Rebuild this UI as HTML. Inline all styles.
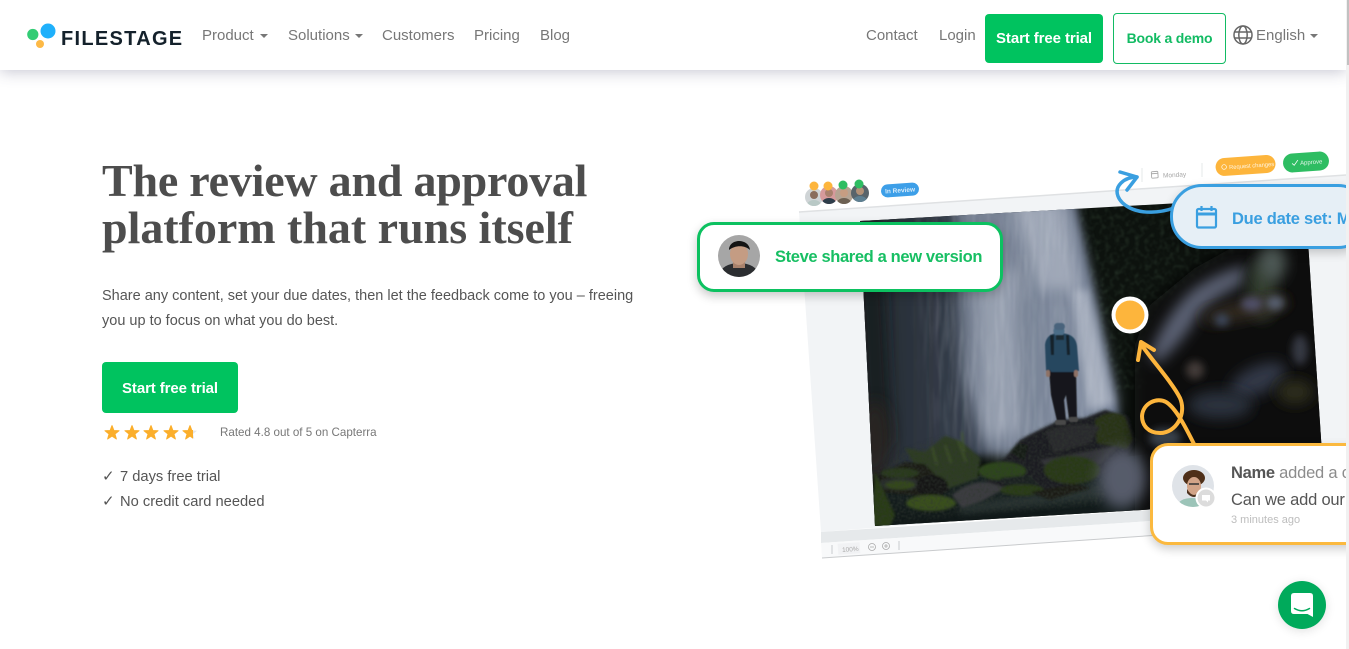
<!DOCTYPE html>
<html lang="en"><head><meta charset="utf-8"><title>Filestage</title>
<style>
html,body{margin:0;padding:0;background:#fff}
body{width:1349px;height:649px;overflow:hidden;position:relative;font-family:"Liberation Sans",sans-serif;color:#555}
.t{position:absolute;white-space:nowrap}
#nav{position:absolute;left:0;top:0;width:1346px;height:70px;background:#fff;box-shadow:0 2px 14px rgba(70,70,110,.3);z-index:5}
#nav .l{position:absolute;top:27px;font-size:15px;line-height:18px;color:#777;white-space:nowrap}
.car{display:inline-block;width:0;height:0;border:4px solid transparent;border-top-color:#777;border-bottom:0;margin-left:5px;vertical-align:2px}
.btn{position:absolute;box-sizing:border-box;text-align:center;font-weight:bold;font-size:14px;letter-spacing:-.2px;border-radius:4px}
.note{position:absolute;box-sizing:border-box;background:#fff;z-index:3}
#bar{position:absolute;left:1346px;top:0;width:3px;height:649px;background:#f1f1f1;z-index:6}
#bar i{position:absolute;left:1px;top:0;width:2px;height:65px;background:#c1c1c1}
</style></head><body>

<svg width="1349" height="649" viewBox="0 0 1349 649" style="position:absolute;left:0;top:0">
<defs>
<filter id="b1" x="-10%" y="-10%" width="120%" height="120%"><feGaussianBlur stdDeviation="1.300"/></filter>
<filter id="b05" x="-10%" y="-10%" width="120%" height="120%"><feGaussianBlur stdDeviation=".6"/></filter>
<filter id="b4" x="-40%" y="-40%" width="180%" height="180%"><feGaussianBlur stdDeviation="4"/></filter>
<filter id="b7" x="-40%" y="-40%" width="180%" height="180%"><feGaussianBlur stdDeviation="7"/></filter>
<filter id="b12" x="-40%" y="-40%" width="180%" height="180%"><feGaussianBlur stdDeviation="12"/></filter>
<filter id="st" x="-5%" y="-5%" width="110%" height="110%"><feTurbulence type="fractalNoise" baseFrequency=".22 .02" numOctaves="3" seed="4" result="n0"/><feColorMatrix in="n0" values="0 0 0 0 .86  0 0 0 0 .89  0 0 0 0 .94  1.6 0 0 0 -.62" result="n1"/><feGaussianBlur in="n1" stdDeviation=".7" result="n2"/><feGaussianBlur in="SourceAlpha" stdDeviation="10" result="a"/><feComposite in="n2" in2="a" operator="in"/></filter>
<filter id="gr" x="0" y="0" width="100%" height="100%"><feTurbulence type="fractalNoise" baseFrequency=".2" numOctaves="2" seed="9"/><feColorMatrix values="0 0 0 0 .09  0 0 0 0 .17  0 0 0 0 .1  2 0 0 0 -.9"/><feGaussianBlur stdDeviation=".8"/></filter>
<filter id="sp" x="-5%" y="-5%" width="110%" height="110%"><feTurbulence type="fractalNoise" baseFrequency=".45" numOctaves="2" seed="3" result="n0"/><feColorMatrix in="n0" values="0 0 0 0 .03  0 0 0 0 .04  0 0 0 0 .03  3 0 0 0 -1.3" result="n1"/><feGaussianBlur in="n1" stdDeviation=".5" result="n2"/><feGaussianBlur in="SourceAlpha" stdDeviation="2" result="a"/><feComposite in="n2" in2="a" operator="in"/></filter>
<linearGradient id="sl" x1="0" x2="1" y1="0" y2="0"><stop offset="0" stop-color="#20252b"/><stop offset=".45" stop-color="#38414f"/><stop offset="1" stop-color="#626f86"/></linearGradient>
<linearGradient id="wat" x1="0" x2="0" y1="0" y2="1"><stop offset="0" stop-color="#1e2a2b"/><stop offset="1" stop-color="#0f1616"/></linearGradient>
<clipPath id="ph"><polygon points="860,221 1305,196 1325,499 875,526"/></clipPath>
<clipPath id="a1"><circle cx="814" cy="197" r="9"/></clipPath>
<clipPath id="a2"><circle cx="829" cy="195" r="9"/></clipPath>
<clipPath id="a3"><circle cx="844" cy="195" r="9"/></clipPath>
<clipPath id="a4"><circle cx="860" cy="193" r="9"/></clipPath>
<clipPath id="st1"><circle cx="739" cy="256" r="21"/></clipPath>
<clipPath id="nm"><circle cx="1193" cy="486" r="21"/></clipPath>
</defs>

<!-- document frame -->
<polygon points="799,212 1346,175 1346,490 821,532" fill="#f2f4f6"/>
<path d="M799 212L1346 175" stroke="#dfe1e3" stroke-width="1.500" fill="none"/>
<polygon points="821,532 1346,497 1346,508 821,543" fill="#e6e9eb"/>
<polygon points="821,543 1346,508 1346,523 822,558" fill="#f8f9fa"/>
<path d="M822 558L1160 535" stroke="#c9cbcd" stroke-width="1" fill="none"/>
<!-- bottom toolbar -->
<path d="M832 545v9M899 541v9" stroke="#c9cbcd" stroke-width="1" fill="none"/>
<rect x="838" y="543" width="22" height="11" fill="#f1f2f4" transform="rotate(-4 849 549)"/>
<text x="842" y="551.500" font-family="Liberation Sans" font-size="6.500" fill="#aaa" transform="rotate(-4 849 549)">100%</text>
<g fill="none" stroke="#aaa" stroke-width=".8"><circle cx="872" cy="547" r="3.500"/><path d="M870 547h4"/><circle cx="886" cy="546" r="3.500"/><path d="M884 546h4M886 544v4"/></g>

<!-- photo -->
<g clip-path="url(#ph)">
<rect x="850" y="190" width="490" height="345" fill="#0d120e"/>
<rect x="1080" y="190" width="240" height="200" filter="url(#gr)" opacity=".3"/>
<polygon points="850,190 1072,190 1122,430 850,480" fill="url(#sl)" filter="url(#b4)"/>
<path d="M955 200L1072 200L1092 290L1118 405L1030 470L985 450L962 380Z" fill="#8e99ac" filter="url(#b7)" opacity=".72"/>
<path d="M975 270L1015 270L1020 430L985 440Z" fill="#bcc3d0" filter="url(#b7)" opacity=".45"/>
<path d="M1072 290L1088 290L1113 405L1088 410Z" fill="#c6ccd8" filter="url(#b4)" opacity=".55"/>
<path d="M1010 200L1062 200L1080 290L1040 290Z" fill="#c2c8d4" filter="url(#b7)" opacity=".5"/>
<polygon points="915,205 1070,205 1115,410 1000,460 935,430" filter="url(#st)" opacity=".2"/>
<path d="M855 215L880 215L892 440L868 470Z" fill="#171b1f" filter="url(#b7)" opacity=".8"/>
<ellipse cx="875" cy="440" rx="16" ry="40" fill="#2e2623" filter="url(#b7)" opacity=".7"/>
<!-- water -->
<polygon points="870,490 1180,450 1180,530 870,530" fill="url(#wat)"/>
<path d="M960 505L1100 485L1100 498L960 514Z" fill="#3c4a4a" filter="url(#b4)" opacity=".55"/>
<!-- bushes -->
<g filter="url(#b1)">
<path d="M905 448L925 452L945 436L962 442L980 458L978 478L950 488L925 482Z" fill="#2e3e22"/>
<path d="M962 432l2 20M958 440l8 22M945 445l6 18M932 447l5 18" stroke="#44582f" stroke-width="2" fill="none" opacity=".8"/>
<path d="M880 476L905 462L925 464L950 490L930 497L880 492Z" fill="#1b1d19"/>
<ellipse cx="900" cy="473" rx="19" ry="5" fill="#2b3a1e"/>
<ellipse cx="900" cy="484" rx="22" ry="6" fill="#2c2f2e"/>
<ellipse cx="900" cy="485" rx="15" ry="4.500" fill="#36491e"/>
<ellipse cx="932" cy="486" rx="16" ry="11" fill="#151512"/>
<ellipse cx="931" cy="503" rx="25" ry="8" fill="#3a511f"/>
<path d="M875 472L895 515L890 526L872 526Z" fill="#2c3e19"/>
</g>
<!-- rocks -->
<g filter="url(#b1)">
<path d="M985 474L1005 458L1020 440L1035 432L1060 420L1085 418L1105 410L1128 416L1135 440L1120 470L1050 492L990 492Z" fill="#1d1f20"/>
<path d="M1010 452q8-12 18-6l-4 14z" fill="#161a13"/>
<path d="M1095 420q15-12 30-3l8 22-6 10-30-6z" fill="#2b3518"/>
<path d="M1045 432q30-12 55-5l-10 16-36 10z" fill="#2a2b2e"/>
<path d="M1040 460L1118 446L1100 464L1050 472Z" fill="#35363a"/>
<ellipse cx="1002" cy="471" rx="24" ry="9" fill="#2e461b"/>
<ellipse cx="1072" cy="470" rx="28" ry="14" fill="#2c3b18"/>
<path d="M952 495q20-16 38-12l16 5-24 13-20 7z" fill="#3e3e43"/>
<path d="M1000 478l30-3 12 12-30 8z" fill="#1f2021"/>
<ellipse cx="1022" cy="490" rx="22" ry="5.500" fill="#2c3d17"/>
<path d="M1030 492l45-8 15 4-40 12z" fill="#1a1c15"/>
</g>
<!-- rock & foliage texture, limited to the rock silhouette -->
<path d="M985 474L1005 458L1020 440L1035 432L1060 420L1085 418L1105 410L1128 416L1135 440L1120 470L1100 505L960 515L875 525L875 475L905 450L945 436L980 458Z" filter="url(#sp)" opacity=".7"/>
<!-- person -->
<g filter="url(#b05)">
<path d="M1049 370L1076 370L1077 418L1069 419L1066 395L1064 400L1066 421L1057 421L1051 395Z" fill="#14171a"/>
<path d="M1045 345C1046 336 1052 333 1059 333C1068 333 1076 336 1077 346L1079 371L1075 371L1074 372L1051 372L1050 370L1046 371Z" fill="#28465f"/>
<path d="M1050 335l1 20 3 0 0-20zM1066 335l1 20 3 0-1-20z" fill="#16222b"/>
<circle cx="1059" cy="331" r="5.500" fill="#4c6d87"/>
<rect x="1054" y="323" width="11" height="7" rx="3.500" fill="#48637c"/>
<path d="M1056 335h8v5h-8z" fill="#1b2a33"/>
<rect x="1046" y="370" width="4" height="7" rx="2" fill="#8e7266"/>
<rect x="1074" y="370" width="4" height="7" rx="2" fill="#8e7266"/>
<rect x="1055" y="420" width="11" height="5" rx="2" fill="#4a4a48"/>
<rect x="1069" y="417" width="9" height="5" rx="2" fill="#4a4a48"/>
</g>
<!-- blurred foreground right -->
<path d="M1135 345L1150 305L1195 268L1255 235L1295 195L1340 190L1340 520L1135 520Z" fill="#0c0d0e" filter="url(#b7)"/>
<path d="M1150 355C1163 322 1180 300 1195 288C1215 275 1232 268 1248 266L1242 284C1222 295 1202 305 1192 325C1178 345 1168 355 1156 364Z" fill="#5c6274" filter="url(#b7)"/>
<ellipse cx="1262" cy="290" rx="14" ry="30" fill="#333c2e" filter="url(#b7)"/>
<ellipse cx="1272" cy="262" rx="14" ry="20" fill="#4d5955" filter="url(#b7)"/>
<ellipse cx="1245" cy="310" rx="45" ry="10" fill="#312b20" filter="url(#b7)" transform="rotate(-12 1245 310)"/>
<ellipse cx="1252" cy="304" rx="11" ry="7" fill="#4f4f68" filter="url(#b4)"/>
<ellipse cx="1275" cy="303" rx="9" ry="7" fill="#565e70" filter="url(#b4)"/>
<ellipse cx="1222" cy="320" rx="7" ry="6" fill="#3c485e" filter="url(#b4)"/>
<ellipse cx="1195" cy="370" rx="9" ry="9" fill="#423b37" filter="url(#b4)"/>
<ellipse cx="1258" cy="380" rx="30" ry="14" fill="#333846" filter="url(#b7)" transform="rotate(-25 1258 380)"/>
<ellipse cx="1300" cy="350" rx="8" ry="15" fill="#343743" filter="url(#b4)"/>
<ellipse cx="1295" cy="392" rx="18" ry="12" fill="#2f2f1b" filter="url(#b7)"/>
<ellipse cx="1220" cy="405" rx="32" ry="14" fill="#2a303c" filter="url(#b7)"/>
<ellipse cx="1122" cy="478" rx="24" ry="30" fill="#565b6a" filter="url(#b7)"/>
<ellipse cx="1165" cy="438" rx="16" ry="10" fill="#393f4a" filter="url(#b4)"/>
</g>

<!-- header toolbar of the doc -->
<g clip-path="url(#a1)"><rect x="804" y="187" width="20" height="20" fill="#cfd4d6"/><circle cx="814" cy="195" r="4" fill="#8a6d5c"/><ellipse cx="814" cy="205" rx="7" ry="5" fill="#b9c9c6"/></g>
<g clip-path="url(#a2)"><rect x="819" y="185" width="20" height="20" fill="#d59a9c"/><circle cx="829" cy="193" r="4" fill="#a9816e"/><ellipse cx="829" cy="203" rx="7" ry="5" fill="#2e3d4a"/></g>
<g clip-path="url(#a3)"><rect x="834" y="185" width="20" height="20" fill="#b5a493"/><circle cx="844" cy="193" r="4" fill="#c69d82"/><ellipse cx="844" cy="203" rx="7" ry="5" fill="#6d6153"/></g>
<g clip-path="url(#a4)"><rect x="850" y="183" width="20" height="20" fill="#59646b"/><circle cx="860" cy="191" r="4" fill="#b39177"/><ellipse cx="860" cy="201" rx="7" ry="5" fill="#5f8092"/></g>
<circle cx="814" cy="186" r="4.500" fill="#fdb53c"/><circle cx="828" cy="186" r="4.500" fill="#fdb53c"/><circle cx="843" cy="185" r="4.500" fill="#2ebd62"/><circle cx="859" cy="184" r="4.500" fill="#2ebd62"/>
<g transform="rotate(-4 900 190)"><rect x="881" y="183.500" width="38" height="13" rx="6.500" fill="#3d9fe8"/><text x="900" y="192.500" font-family="Liberation Sans" font-size="6.500" font-weight="bold" fill="#d8ecfb" text-anchor="middle">In Review</text></g>
<path d="M1142 168v14M1202 163v14" stroke="#e6e8ea" stroke-width="1" fill="none"/>
<g transform="rotate(-4 1155 175)"><rect x="1151.500" y="171.500" width="6.500" height="6.500" rx="1" fill="none" stroke="#aaa" stroke-width=".9"/><path d="M1151.500 173.500h6.500" stroke="#aaa" stroke-width=".9"/></g>
<text x="1163" y="177" font-family="Liberation Sans" font-size="6.500" fill="#a5a5a5" transform="rotate(-3 1175 175)">Monday</text>
<g transform="rotate(-4 1245 165)"><rect x="1215.500" y="156.500" width="60" height="18" rx="9" fill="#fdb53c"/><circle cx="1224" cy="165.500" r="2.300" fill="none" stroke="#fff" stroke-width=".7"/><text x="1229" y="168" font-family="Liberation Sans" font-size="5.800" fill="#fff5e0">Request changes</text></g>
<g transform="rotate(-4 1306 162)"><rect x="1283" y="152.500" width="46" height="19" rx="9.500" fill="#2ebd62"/><path d="M1292 162.500l2 2 4-5" stroke="#fff" stroke-width=".8" fill="none"/><text x="1300" y="164.500" font-family="Liberation Sans" font-size="6" fill="#dff5e7">Approve</text></g>
<!-- blue arrow -->
<path d="M1174 208C1160 213 1142 214 1130 208C1118 202 1113 191 1121 183C1125 179 1131 177 1137 177" fill="none" stroke="#3a9fe0" stroke-width="3.500" stroke-linecap="round"/>
<path d="M1120 172L1137 177L1127 190" fill="none" stroke="#3a9fe0" stroke-width="3.500" stroke-linecap="round" stroke-linejoin="round"/>
<!-- orange marker + arrow -->
<circle cx="1130" cy="315" r="18.500" fill="#fff"/><circle cx="1130" cy="315" r="14.500" fill="#fdb53c"/>
<path d="M1141 344C1150 358 1172 382 1180 398C1187 414 1176 433 1160 433C1148 433 1142 425 1142 416C1143 403 1157 397 1166 402C1176 408 1186 428 1195 446" fill="none" stroke="#fdb53c" stroke-width="4" stroke-linecap="round"/>
<path d="M1138 360L1141 342L1154 350" fill="none" stroke="#fdb53c" stroke-width="4" stroke-linecap="round" stroke-linejoin="round"/>
</svg>

<!-- Notes -->
<div class="note" style="left:697px;top:222px;width:306px;height:70px;border:3px solid #0cc160;border-radius:17px;box-shadow:0 4px 10px rgba(0,0,0,.22)"></div>
<div class="t" style="left:775px;top:247px;font-size:16.500px;line-height:20px;font-weight:bold;color:#17bf63;z-index:4;letter-spacing:-.36px">Steve shared a new version</div>
<svg width="44" height="44" viewBox="717 234 44 44" style="position:absolute;left:717px;top:234px;z-index:4">
<g clip-path="url(#st1)"><rect x="717" y="234" width="44" height="44" fill="#a6a6a6"/><ellipse cx="739" cy="274" rx="19" ry="11" fill="#2b2d30"/><rect x="733" y="258" width="12" height="10" fill="#a8826c"/><ellipse cx="739" cy="254" rx="9" ry="11" fill="#c49c83"/><path d="M729 250C729 238 749 238 750 250C745 245 735 245 729 250Z" fill="#141414"/></g></svg>

<div class="note" style="left:1170px;top:184px;width:200px;height:65px;border:3px solid #3a9fe0;border-radius:32px;background:#e6eff6;box-shadow:0 4px 10px rgba(0,0,0,.2)"></div>
<svg width="24" height="25" viewBox="0 0 24 25" style="position:absolute;left:1195px;top:205px;z-index:4"><rect x="2" y="4" width="19" height="18.500" rx="1.500" fill="none" stroke="#3a9fe0" stroke-width="2.200"/><path d="M2 9h19" stroke="#3a9fe0" stroke-width="3"/><path d="M6.500 1v5M16.500 1v5" stroke="#3a9fe0" stroke-width="2.200"/></svg>
<div class="t" style="left:1232px;top:209px;font-size:16.500px;line-height:20px;font-weight:bold;color:#3a9fe0;z-index:4;letter-spacing:-.25px">Due date set: M</div>

<div class="note" style="left:1150px;top:443px;width:220px;height:102px;border:3px solid #fbb93f;border-radius:18px;box-shadow:0 4px 10px rgba(0,0,0,.2)"></div>
<svg width="50" height="50" viewBox="1170 464 50 50" style="position:absolute;left:1170px;top:464px;z-index:4">
<g clip-path="url(#nm)"><rect x="1170" y="464" width="50" height="50" fill="#dfe3e8"/><ellipse cx="1192" cy="505" rx="14" ry="7" fill="#9cc4b8"/><ellipse cx="1194" cy="478" rx="11" ry="8" fill="#4f3019"/><ellipse cx="1194" cy="486" rx="7" ry="9" fill="#d2a488"/><path d="M1187 489q7 12 14 0l0 4q-7 8-14 0z" fill="#4d3220"/><path d="M1189 484h10" stroke="#333" stroke-width="1.500"/></g>
<circle cx="1206" cy="498" r="10.500" fill="#fff"/><circle cx="1206" cy="498" r="8.500" fill="#dcdcdc"/><path d="M1202 495h8v5.500h-2v2l-2-2h-4z" fill="#fff"/></svg>
<div class="t" style="left:1231px;top:463px;font-size:16.500px;line-height:20px;color:#8c8c8c;z-index:4;letter-spacing:-.2px"><b style="color:#555;letter-spacing:-.3px">Name</b> added a c</div>
<div class="t" style="left:1231px;top:490px;font-size:16.500px;line-height:20px;color:#555;z-index:4;letter-spacing:-.2px">Can we add our</div>
<div class="t" style="left:1231px;top:513px;font-size:11px;line-height:14px;color:#bdbdbd;z-index:4">3 minutes ago</div>

<!-- Nav -->
<div id="nav">
<svg width="32" height="28" viewBox="0 0 32 28" style="position:absolute;left:26px;top:22px"><circle cx="6.800" cy="12.500" r="5.600" fill="#33cc75"/><circle cx="22" cy="9" r="7.500" fill="#1fb0fb"/><circle cx="14" cy="22" r="4" fill="#fdb946"/></svg>
<div class="t" style="left:61px;top:27.500px;font-size:20px;line-height:22px;font-weight:bold;color:#14212b;letter-spacing:1.300px">FILESTAGE</div>
<div class="l" style="left:202px">Product<span class="car" style="margin-left:6px"></span></div>
<div class="l" style="left:288px">Solutions<span class="car" style="margin-left:5px"></span></div>
<div class="l" style="left:382px">Customers</div>
<div class="l" style="left:474px">Pricing</div>
<div class="l" style="left:540px">Blog</div>
<div class="l" style="left:866px">Contact</div>
<div class="l" style="left:939px">Login</div>
<div class="btn" style="left:985px;top:14px;width:118px;height:49px;line-height:49px;background:#00c35f;color:#fff;font-size:15px;letter-spacing:-.1px">Start free trial</div>
<div class="btn" style="left:1113px;top:13px;width:113px;height:51px;line-height:49px;background:#fff;border:1px solid #12bb63;color:#12bb63">Book a demo</div>
<svg width="21" height="21" viewBox="0 0 21 21" style="position:absolute;left:1233px;top:25px"><g fill="none" stroke="#666" stroke-width="1.500"><circle cx="10" cy="10" r="9"/><ellipse cx="10" cy="10" rx="4.200" ry="9"/><path d="M1.500 7h17M1.500 13h17"/></g></svg>
<div class="l" style="left:1256px">English<span class="car"></span></div>
</div>

<!-- Hero -->
<div class="t" style="left:102px;top:155px;font-family:'Liberation Serif',serif;font-weight:bold;font-size:46px;line-height:52px;color:#4d4d4d;letter-spacing:-.22px">The review and approval</div>
<div class="t" style="left:102px;top:202px;font-family:'Liberation Serif',serif;font-weight:bold;font-size:46px;line-height:52px;color:#4d4d4d;letter-spacing:-.02px">platform that runs itself</div>
<div class="t" style="left:102px;top:286px;font-size:14.500px;line-height:20px;color:#555">Share any content, set your due dates, then let the feedback come to you – freeing</div>
<div class="t" style="left:102px;top:311px;font-size:14.500px;line-height:20px;color:#555">you up to focus on what you do best.</div>
<div class="btn" style="left:102px;top:362px;width:136px;height:51px;line-height:53px;background:#00c35f;color:#fff;font-size:15px;letter-spacing:-.1px">Start free trial</div>

<svg width="110" height="20" viewBox="0 0 110 20" style="position:absolute;left:102px;top:423px">
<defs><path id="s" stroke-linejoin="round" d="M0-7.400L1.850-2.530 7.030-2.290 2.980.97 4.350 5.990 0 3.130-4.350 5.990-2.980.97-7.030-2.290-1.850-2.530Z"/><clipPath id="hc"><rect x="0" y="0" width="91" height="20"/></clipPath></defs>
<g fill="#fbae2b" stroke="#fbae2b" stroke-width="1"><use href="#s" x="10" y="10"/><use href="#s" x="30" y="10"/><use href="#s" x="49" y="10"/><use href="#s" x="69" y="10"/></g>
<use href="#s" x="88" y="10" fill="#e6e6e6"/>
<g clip-path="url(#hc)"><use href="#s" x="88" y="10" fill="#fbae2b" stroke="#fbae2b" stroke-width="1"/></g>
</svg>
<div class="t" style="left:220px;top:426px;font-size:11.600px;line-height:14px;color:#777">Rated 4.8 out of 5 on Capterra</div>
<div class="t" style="left:102px;top:466px;font-size:14.700px;line-height:20px;color:#555"><span style="font-family:'DejaVu Sans',sans-serif;font-size:15px;display:inline-block;width:18px">✓</span>7 days free trial</div>
<div class="t" style="left:102px;top:491px;font-size:14.700px;line-height:20px;color:#555"><span style="font-family:'DejaVu Sans',sans-serif;font-size:15px;display:inline-block;width:18px">✓</span>No credit card needed</div>

<!-- Chat -->
<div style="position:absolute;left:1278px;top:581px;width:48px;height:48px;border-radius:50%;background:#00aa5b;box-shadow:0 2px 10px rgba(0,0,0,.12);z-index:7">
<svg width="48" height="48" viewBox="0 0 48 48"><path d="M16 12H32Q35 12 35 15V36L29.500 33H16Q13 33 13 30V15Q13 12 16 12Z" fill="#fff"/><path d="M16.500 27.500Q24 32 31.500 27.500" fill="none" stroke="#00aa5b" stroke-width="1.500" stroke-linecap="round"/></svg></div>

<div id="bar"><i></i></div>
</body></html>
